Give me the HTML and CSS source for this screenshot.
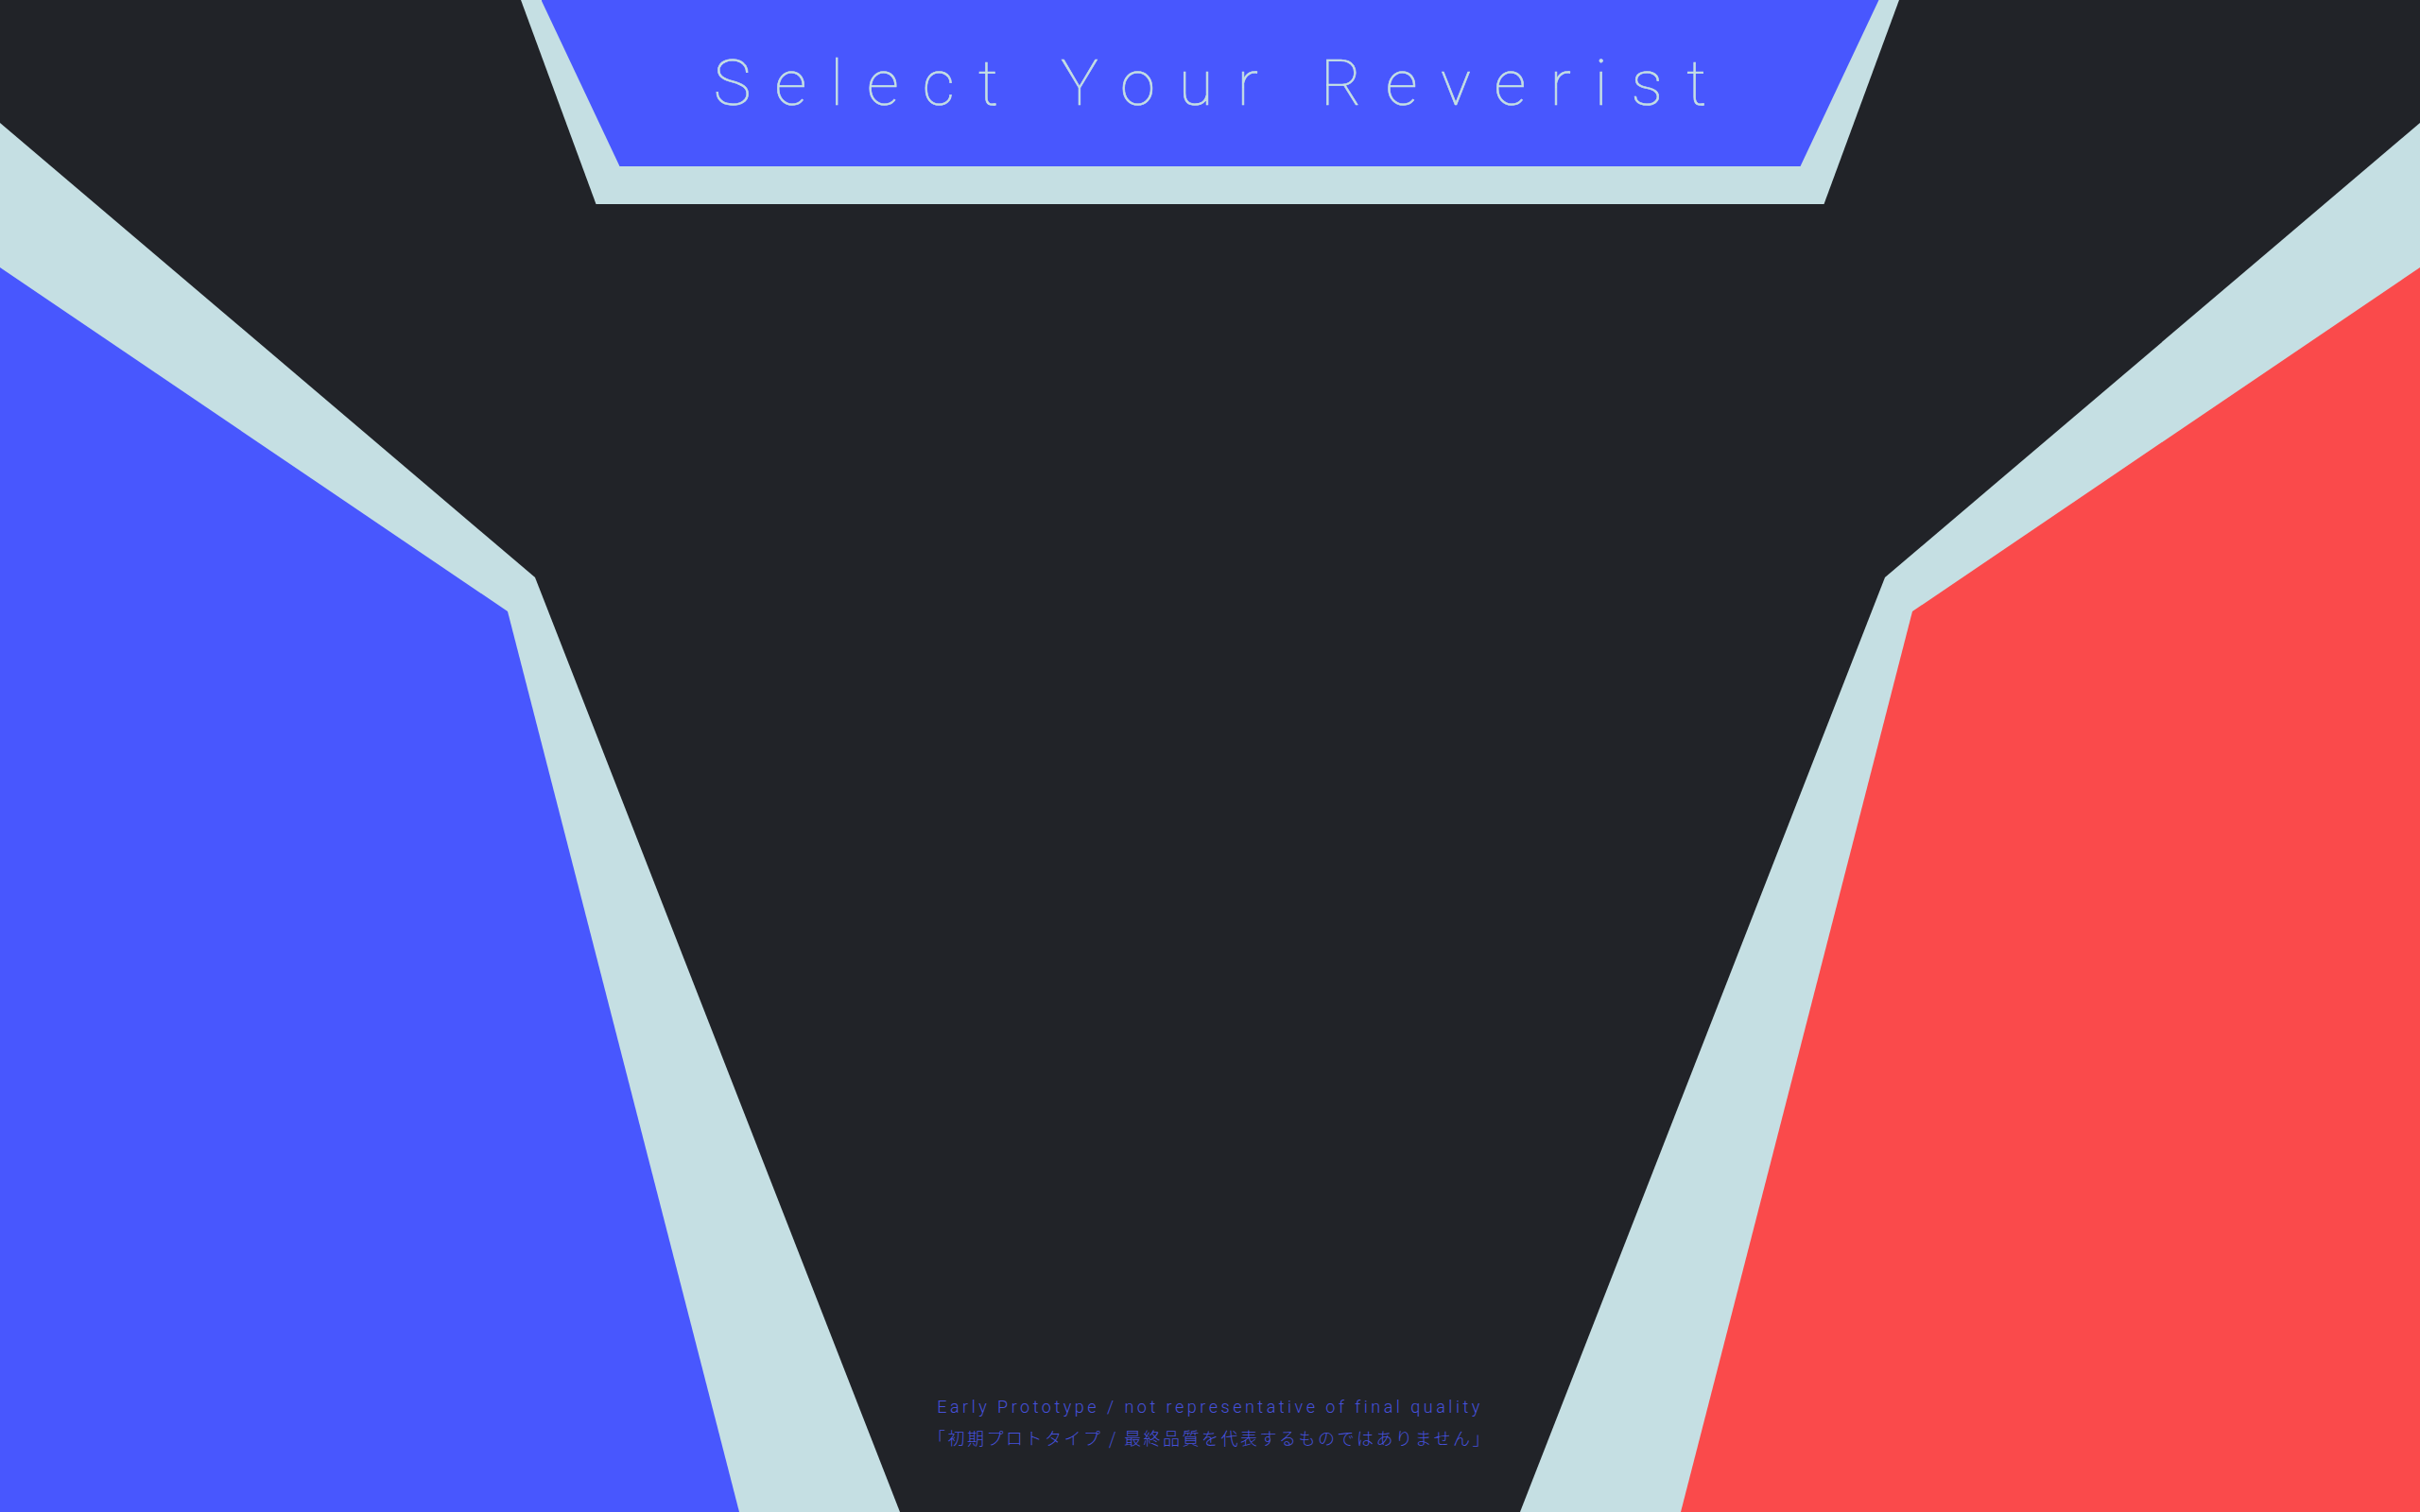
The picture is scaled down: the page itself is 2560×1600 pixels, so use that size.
FILE: index.html
```html
<!DOCTYPE html>
<html lang="en">
<head>
<meta charset="utf-8">
<title>Select Your Reverist</title>
<link rel="stylesheet" href="styles.css">
</head>
<body>
<main class="screen">
  <div class="side side-left" aria-hidden="true"><div class="side-fill"></div></div>
  <div class="side side-right" aria-hidden="true"><div class="side-fill"></div></div>

  <header class="banner">
    <div class="banner-inner">
      <h1 class="title">Select Your Reverist</h1>
    </div>
  </header>

  <div class="stage"></div>

  <footer class="notice">
    <p class="notice-line">Early Prototype / not representative of final quality</p>
    <p class="notice-line notice-jp">「初期プロトタイプ / 最終品質を代表するものではありません」</p>
  </footer>
</main>
</body>
</html>
```

FILE: styles.css
```css
html, body {
  margin: 0;
  padding: 0;
  background: #212328;
}

.screen {
  position: relative;
  width: 2560px;
  height: 1600px;
  overflow: hidden;
  background: #212328;
  display: flex;
  flex-direction: column;
  align-items: center;
}

/* Decorative side panels (backdrop) */
.side {
  position: absolute;
  top: 130px;
  width: 952px;
  height: 1470px;
  background: #c5dfe3;
  z-index: 0;
}

.side-left {
  left: 0;
  clip-path: polygon(0 0, 566px 481px, 952px 1470px, 0 1470px);
}

.side-right {
  right: 0;
  clip-path: polygon(952px 0, 386px 481px, 0 1470px, 952px 1470px);
}

.side-fill {
  position: absolute;
  inset: 0;
}

.side-left .side-fill {
  background: #4857fe;
  clip-path: polygon(0 153px, 537px 517px, 782px 1470px, 0 1470px);
}

.side-right .side-fill {
  background: #fa4a4b;
  clip-path: polygon(952px 153px, 415px 517px, 170px 1470px, 952px 1470px);
}

/* Title banner */
.banner {
  position: relative;
  z-index: 1;
  width: 1458px;
  height: 216px;
  flex: none;
  background: #c5dfe3;
  clip-path: polygon(0 0, 1458px 0, 1378.5px 216px, 79.5px 216px);
  display: flex;
  justify-content: center;
}

.banner-inner {
  width: 1415px;
  height: 176px;
  background: #4857fe;
  clip-path: polygon(0 0, 1415px 0, 1332px 176px, 83px 176px);
  display: flex;
  align-items: center;
  justify-content: center;
}

.title {
  margin: 0;
  padding-left: 25px;
  font-family: Roboto, "Liberation Sans", sans-serif;
  font-weight: 100;
  font-size: 67px;
  letter-spacing: 25px;
  color: #c5dfe3;
  line-height: 1;
  -webkit-text-stroke: 0.6px #c5dfe3;
}

.stage {
  flex: 1;
}

/* Footer notice */
.notice {
  position: relative;
  z-index: 1;
  padding-bottom: 63px;
  text-align: center;
  color: #4651dc;
  font-family: Roboto, "Noto Sans CJK JP", sans-serif;
  font-weight: 300;
  font-size: 18px;
  letter-spacing: 3.5px;
}

.notice-line {
  margin: 0;
  line-height: 32px;
}

.notice-jp {
  font-family: "Noto Sans CJK JP", sans-serif;
  font-weight: 300;
  font-size: 18px;
  letter-spacing: 2.5px;
}
```
